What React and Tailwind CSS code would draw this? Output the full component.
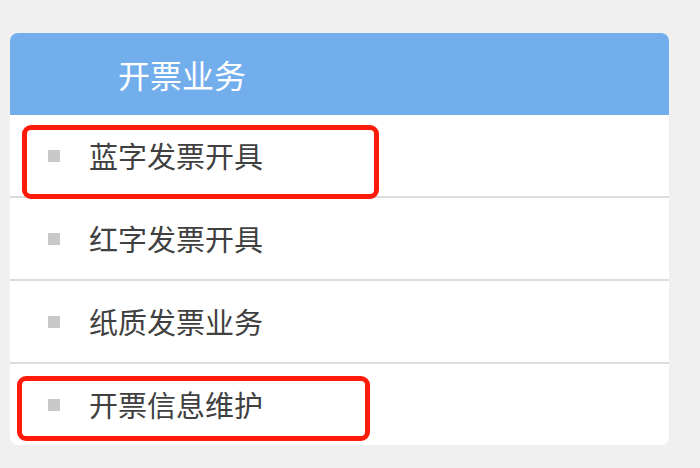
import React from "react";

const items = ["蓝字发票开具", "红字发票开具", "纸质发票业务", "开票信息维护"];

const App = () => {
  return (
    <div
      className="w-[700px] h-[468px] bg-[#f0f0f0] pt-[33px] pl-[10px] overflow-hidden"
      style={{ fontFamily: '"Noto Sans CJK SC", "Microsoft YaHei", sans-serif' }}
    >
      <div className="relative w-[659px] bg-white rounded-lg overflow-visible">
        {/* Header */}
        <div className="h-[82px] bg-[#72aeec] rounded-t-lg flex items-center pl-[108px]">
          <span className="text-[32px] text-white leading-none">开票业务</span>
        </div>

        {/* Menu rows */}
        <ul>
          {items.map((item, i) => (
            <li
              key={item}
              className={`flex items-center pl-[38px] text-[#404040] ${
                i < items.length - 1 ? "h-[83px] border-b-2 border-[#dcdcdc]" : "h-[81px] rounded-b-md"
              }`}
            >
              <span className="w-3 h-3 bg-[#c8c8c8] mr-[29px] shrink-0"></span>
              <span className="text-[29px] leading-none">{item}</span>
            </li>
          ))}
        </ul>

        {/* Annotation boxes */}
        <div className="absolute left-[12px] top-[92px] w-[357px] h-[74px] border-[5px] border-[#ff1a0a] rounded-[9px]"></div>
        <div className="absolute left-[7px] top-[343px] w-[353px] h-[65px] border-[5px] border-[#ff1a0a] rounded-[9px]"></div>
      </div>
    </div>
  );
};

export default App;
